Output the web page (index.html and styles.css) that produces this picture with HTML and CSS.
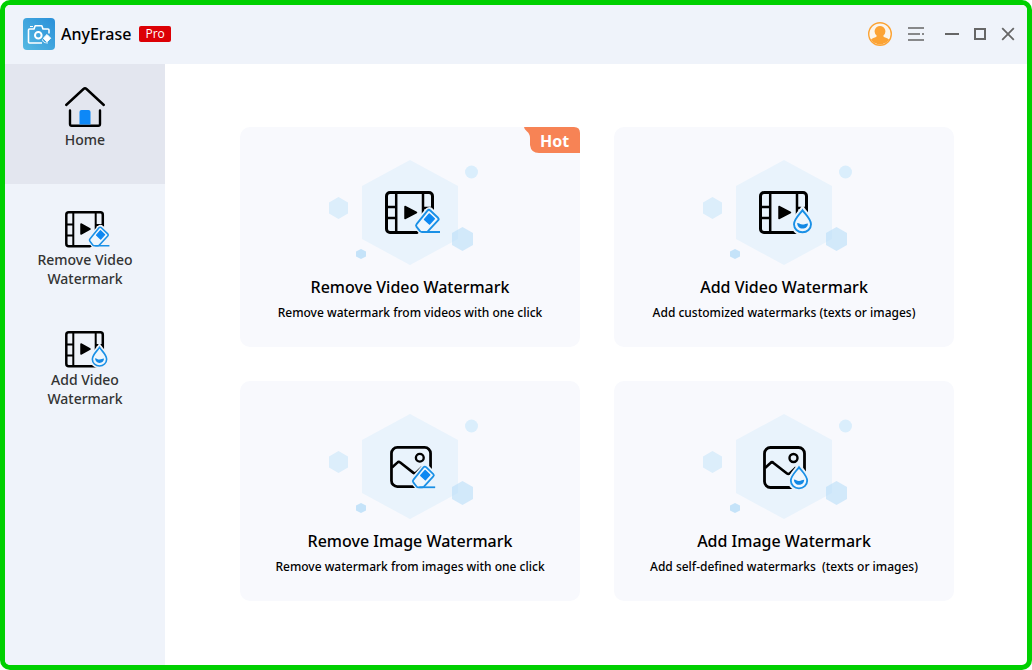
FILE: index.html
```html
<!DOCTYPE html>
<html lang="en">
<head>
    <meta charset="utf-8">
    <title>AnyErase Pro</title>
    <link rel="stylesheet" href="styles.css">
</head>
<body>
    <!-- shared shapes -->
    <svg class="sprite" aria-hidden="true">
        <symbol id="hexagons" viewBox="0 0 164 106">
            <path d="M82 0l48 26v53l-48 26-48-26V26z" fill="#e9f3fc"/>
            <path d="M10.500 37l9.500 5.500v11L10.500 59 1 53.500v-11z" fill="#dceefb"/>
            <path d="M134.500 67l10.500 6v12l-10.500 6-10.500-6V73z" fill="#b9def8" fill-opacity=".6"/>
            <path d="M33 89l5 2.500v5L33 99l-5-2.500v-5z" fill="#c5e3f9"/>
            <circle cx="143.500" cy="12" r="6.500" fill="#daeefc"/>
        </symbol>
        <symbol id="film" viewBox="0 0 50 44">
            <g fill="none" stroke="#000" stroke-width="3">
                <rect x="1.500" y="1.500" width="46" height="40" rx="3.500"/>
                <path d="M11.200 2v39M38 2v39" stroke-width="2.500"/>
                <path d="M2 16h9M2 27h9M38 17h9" stroke-width="2.500"/>
            </g>
            <path d="M20 15.500v12l11.500-6z" stroke="#000" stroke-width="1.500" stroke-linejoin="round"/>
        </symbol>
        <symbol id="film-small" viewBox="0 0 40 37">
            <g fill="none" stroke="#000" stroke-width="2.500">
                <rect x="1.300" y="1.300" width="36.500" height="34" rx="2.500"/>
                <path d="M8.300 2v33M30.700 2v33" stroke-width="2"/>
                <path d="M2 13.500h6M2 24.500h6M31 14h6" stroke-width="2"/>
            </g>
            <path d="M16 13v10l9-5z" stroke="#000" stroke-width="1.500" stroke-linejoin="round"/>
        </symbol>
        <symbol id="picture" viewBox="0 0 44 44">
            <g fill="none" stroke="#000" stroke-width="2.800" stroke-linejoin="round">
                <rect x="1.500" y="1.500" width="40" height="40" rx="6"/>
                <circle cx="30.500" cy="12" r="4" stroke-width="2.400"/>
                <path d="M2 22l5.500-5c1-1 2-1 3 0L24 27.500c1 .8 2 .6 3-.4l6-5.600" stroke-width="2.600"/>
            </g>
        </symbol>
        <symbol id="eraser" viewBox="-3 -3 31 30" overflow="visible">
            <path class="halo" d="M15.500 1.600l7.500 7.500q1.200 1.200 0 2.400L12 22.800H6.500L1.800 17q-1-1.200 0-2.400L13 1.700q1.200-1.200 2.500-.1z"/>
            <path class="halo" d="M10 23l12-9v9z"/>
            <path d="M15.300 1.500l7.700 7.300q1.300 1.300 0 2.600L13 22.200q-.8.800-2 .8H7q-1.200 0-2-.8L1.600 17.800q-1.100-1.400 0-2.700L12.500 1.600q1.300-1.400 2.800-.1z" fill="#eef6fd" stroke="#1a90e6" stroke-width="1.900"/>
            <path d="M14.300 5l5 4.700-4.800 5.400-5-4.700z" fill="#0d88f2" stroke="#0d88f2" stroke-width="1.400" stroke-linejoin="round"/>
            <path d="M8 23h17" stroke="#1a90e6" stroke-width="1.900"/>
        </symbol>
        <symbol id="drop" viewBox="-3 -3 25 30" overflow="visible">
            <path class="halo" d="M9.500 1.200C12 5 18 10 18 15.300a8.500 8 0 0 1-17 0C1 10 7 5 9.500 1.200z"/>
            <path d="M9.500 1.200C12 5 18 10 18 15.300a8.500 8 0 0 1-17 0C1 10 7 5 9.500 1.200z" fill="#eef6fd" stroke="#1a90e6" stroke-width="1.900"/>
            <path d="M4.200 14c2.300 0 2.800 1.600 5.300 1.600s3-1.200 5.400-1.200c0 3.200-2.400 5.200-5.400 5.200s-5.300-2.400-5.300-5.600z" fill="#1288e4"/>
        </symbol>
    </svg>

    <div class="window">
        <header class="titlebar">
            <svg class="logo" viewBox="0 0 32 32" aria-hidden="true">
                <defs>
                    <linearGradient id="logo-fill" x1="0" x2="1" y1="1" y2="0">
                        <stop offset="0" stop-color="#55b9e2"/>
                        <stop offset="1" stop-color="#2b90d9"/>
                    </linearGradient>
                </defs>
                <rect width="32" height="32" rx="4" fill="url(#logo-fill)"/>
                <g fill="none" stroke="#fff" stroke-width="1.600" stroke-linejoin="round">
                    <path d="M19 25H6.500q-1 0-1-1V12q0-1 1-1H11l1.200-3.200h6.600L20 11h5q1 0 1 1v3.500"/>
                    <circle cx="15.300" cy="17.300" r="3.300" stroke-width="2"/>
                    <path d="M7 8.500h3" stroke-width="1.200"/>
                </g>
                <path d="M24 16.500l3.700 3.700-3.700 3.700-3.700-3.700z" fill="#fff" stroke="#fff" stroke-linejoin="round"/>
                <path d="M19.500 21.500q0 3.500 5.500 3.500" fill="none" stroke="#e5f4fc"/>
            </svg>
            <h1 class="app-name">AnyErase</h1>
            <span class="badge">Pro</span>

            <div class="controls">
                <button class="control user" type="button" aria-label="Account">
                    <svg viewBox="0 0 24 24" width="24" height="24">
                        <circle cx="12" cy="12" r="11.300" fill="#fbf5ec" stroke="#fca334" stroke-width="1.400"/>
                        <path d="M12 4a5.300 5.300 0 0 1 3.400 9.400v1c1 1 4 1.400 5.600 3a10.600 10.600 0 0 1-18 0c1.600-1.600 4.600-2 5.600-3v-1A5.300 5.300 0 0 1 12 4z" fill="#fca334"/>
                    </svg>
                </button>
                <button class="control menu" type="button" aria-label="Menu">
                    <svg viewBox="0 0 16 16" width="16" height="16">
                        <path d="M0 2h16M0 8h12M14 8h2M0 14h16" stroke="#666" stroke-width="1.700"/>
                    </svg>
                </button>
                <button class="control" type="button" aria-label="Minimize">
                    <svg viewBox="0 0 14 14" width="14" height="14">
                        <path d="M0 7h14" stroke="#666" stroke-width="1.800"/>
                    </svg>
                </button>
                <button class="control" type="button" aria-label="Maximize">
                    <svg viewBox="0 0 14 14" width="14" height="14">
                        <rect x="2" y="2" width="10" height="10" fill="none" stroke="#666" stroke-width="2"/>
                    </svg>
                </button>
                <button class="control" type="button" aria-label="Close">
                    <svg viewBox="0 0 14 14" width="14" height="14">
                        <path d="M1.200 1.200l11.600 11.600M12.800 1.200L1.200 12.800" stroke="#666" stroke-width="1.800"/>
                    </svg>
                </button>
            </div>
        </header>

        <div class="body">
            <nav class="sidebar">
                <a class="nav-item active" href="#">
                    <svg class="nav-icon" viewBox="0 0 46 44" aria-hidden="true">
                        <g fill="none" stroke="#000" stroke-width="2.400" stroke-linecap="round" stroke-linejoin="round">
                            <path d="M4.200 19L21.500 3q1.500-1.300 3 0L41.800 19"/>
                            <path d="M8 24.500V38q0 1.700 1.700 1.700h26.600q1.700 0 1.700-1.700V24.500"/>
                        </g>
                        <path d="M17.500 38.500V26q0-2 2-2h7q2 0 2 2v12.500z" fill="#0d88f7"/>
                    </svg>
                    <span>Home</span>
                </a>
                <a class="nav-item" href="#">
                    <svg class="nav-icon" viewBox="0 0 46 44" aria-hidden="true">
                        <use href="#film-small" x="3" y="5" width="40" height="37"/>
                        <use href="#eraser" x="24" y="18" width="26" height="25"/>
                    </svg>
                    <span>Remove Video Watermark</span>
                </a>
                <a class="nav-item" href="#">
                    <svg class="nav-icon" viewBox="0 0 46 44" aria-hidden="true">
                        <use href="#film-small" x="3" y="5" width="40" height="37"/>
                        <use href="#drop" x="27" y="17" width="21" height="27"/>
                    </svg>
                    <span>Add Video Watermark</span>
                </a>
            </nav>

            <main class="cards">
                <a class="card" href="#">
                    <span class="hot">
                        <svg class="hot-shape" viewBox="0 0 56 26" aria-hidden="true">
                            <path d="M0 0h50q6 0 6 6v20H15Q7 26 6 18V11Q6 7 3 4.500 0 2 0 0z" fill="#f78355"/>
                        </svg>
                        <span class="hot-text">Hot</span>
                    </span>
                    <svg class="art" viewBox="0 0 164 106" aria-hidden="true">
                        <use href="#hexagons" width="164" height="106"/>
                        <use href="#film" x="57" y="31" width="50" height="44"/>
                        <use href="#eraser" x="84" y="46" width="31" height="30"/>
                    </svg>
                    <h2 class="card-title">Remove Video Watermark</h2>
                    <p class="card-text">Remove watermark from videos with one click</p>
                </a>
                <a class="card" href="#">
                    <svg class="art" viewBox="0 0 164 106" aria-hidden="true">
                        <use href="#hexagons" width="164" height="106"/>
                        <use href="#film" x="57" y="31" width="50" height="44"/>
                        <use href="#drop" x="88" y="46" width="25" height="30"/>
                    </svg>
                    <h2 class="card-title">Add Video Watermark</h2>
                    <p class="card-text">Add customized watermarks (texts or images)</p>
                </a>
                <a class="card" href="#">
                    <svg class="art" viewBox="0 0 164 106" aria-hidden="true">
                        <use href="#hexagons" width="164" height="106"/>
                        <use href="#picture" x="62" y="32" width="43" height="43"/>
                        <use href="#eraser" x="81" y="49" width="29" height="28"/>
                    </svg>
                    <h2 class="card-title">Remove Image Watermark</h2>
                    <p class="card-text">Remove watermark from images with one click</p>
                </a>
                <a class="card" href="#">
                    <svg class="art" viewBox="0 0 164 106" aria-hidden="true">
                        <use href="#hexagons" width="164" height="106"/>
                        <use href="#picture" x="61" y="32" width="44" height="44"/>
                        <use href="#drop" x="85" y="49" width="24" height="29"/>
                    </svg>
                    <h2 class="card-title">Add Image Watermark</h2>
                    <p class="card-text">Add self-defined watermarks&nbsp; (texts or images)</p>
                </a>
            </main>
        </div>
    </div>
</body>
</html>
```
FILE: styles.css
```css
* {
    box-sizing: border-box;
}

body {
    margin: 0;
    background-color: white;
    font-family: "Noto Sans", "Open Sans", sans-serif;
    color: #000;
}

a {
    color: inherit;
    text-decoration: none;
}

.sprite {
    position: absolute;
    width: 0;
    height: 0;
}

.window {
    display: flex;
    flex-direction: column;
    min-height: 100vh;
    border: 5px solid #00d000;
    border-radius: 10px;
    overflow: hidden;
}

/* title bar */
.titlebar {
    display: flex;
    align-items: center;
    height: 59px;
    padding: 0 12px 2px 18px;
    background-color: #eff3fa;
}

.logo {
    width: 32px;
    height: 32px;
    margin-right: 6px;
}

.app-name {
    margin: 0 8px 0 0;
    font-size: 16px;
    font-weight: 500;
    line-height: 22px;
}

.badge {
    padding: 0 6px;
    border-radius: 2px;
    background-color: #dc0005;
    color: white;
    font-family: "Open Sans", sans-serif;
    font-size: 12px;
    line-height: 16px;
}

.controls {
    display: flex;
    align-items: center;
    gap: 14px;
    margin-left: auto;
}

.control {
    display: flex;
    padding: 0;
    border: none;
    background: none;
    cursor: pointer;
}

.user {
    margin-right: 2px;
}

.menu {
    margin-right: 7px;
}

/* sidebar */
.body {
    display: flex;
    flex: 1;
}

.sidebar {
    width: 160px;
    background-color: #eff3fa;
}

.nav-item {
    --halo: #eff3fa;
    display: flex;
    flex-direction: column;
    align-items: center;
    height: 120px;
    padding: 22px 28px 0;
    color: #333;
    font-size: 14px;
    font-weight: 500;
    line-height: 19px;
    text-align: center;
}

.nav-item.active {
    background-color: #e3e6ef;
}

.nav-icon {
    width: 46px;
    height: 44px;
    overflow: visible;
}

.halo {
    fill: var(--halo);
    stroke: var(--halo);
    stroke-width: 6px;
}

/* cards */
.cards {
    display: grid;
    flex: 1;
    grid-template-columns: 1fr 1fr;
    align-content: start;
    gap: 34px;
    padding: 63px 73px 63px 75px;
}

.card {
    --halo: #e9f3fc;
    position: relative;
    display: flex;
    flex-direction: column;
    align-items: center;
    padding: 33px 20px 25px;
    border-radius: 10px;
    background-color: #f8f9fd;
    text-align: center;
}

.art {
    width: 164px;
    height: 106px;
}

.card-title {
    margin: 10px 0 6px;
    font-size: 16px;
    font-weight: 500;
    line-height: 22px;
}

.card-text {
    margin: 0;
    font-size: 12px;
    font-weight: 500;
    line-height: 18px;
}

.hot {
    position: absolute;
    top: 0;
    right: 0;
    display: grid;
    width: 56px;
    height: 26px;
}

.hot-shape,
.hot-text {
    grid-area: 1 / 1;
}

.hot-text {
    padding-left: 5px;
    color: white;
    font-size: 16px;
    font-weight: 700;
    line-height: 28px;
}
```
